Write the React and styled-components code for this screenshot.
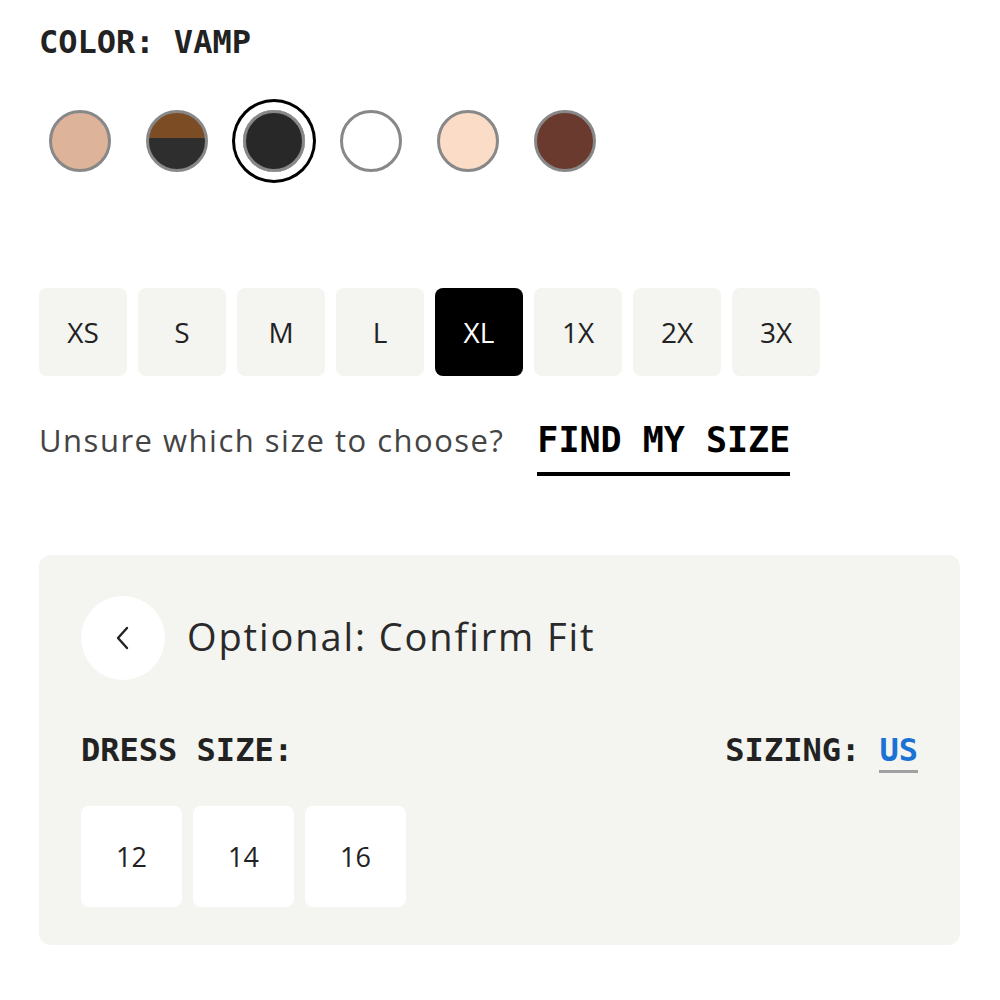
import React, { useState } from "react";
import styled, { createGlobalStyle } from "styled-components";

const GlobalStyle = createGlobalStyle`
  body {
    margin: 0;
    background: #ffffff;
    font-family: "Open Sans", "Liberation Sans", Arial, sans-serif;
  }
`;

const mono = `"DejaVu Sans Mono", "Liberation Mono", monospace`;
const sans = `"Open Sans", "Liberation Sans", Arial, sans-serif`;

const Page = styled.div`
  width: 1000px;
  padding: 24px 40px 0 39px;
  box-sizing: border-box;
`;

const Label = styled.div`
  font-family: ${mono};
  font-weight: 700;
  font-size: 32px;
  line-height: 36px;
  color: #222;
`;

const SwatchRow = styled.div`
  display: flex;
  align-items: center;
  gap: 35px;
  margin-top: 50px;
  padding-left: 10px;
`;

const SwatchRing = styled.div`
  width: 62px;
  height: 62px;
  border-radius: 50%;
  display: flex;
  align-items: center;
  justify-content: center;
  box-shadow: ${(p) => (p.$active ? "0 0 0 8px #fff, 0 0 0 11px #000" : "none")};
`;

const Swatch = styled.div`
  width: 62px;
  height: 62px;
  border-radius: 50%;
  box-sizing: border-box;
  border: 3px solid #888;
  background: ${(p) => p.$fill};
`;

const SizeRow = styled.div`
  display: flex;
  gap: 11px;
  margin-top: 116px;
`;

const SizeButton = styled.button`
  width: 88px;
  height: 88px;
  border: none;
  border-radius: 8px;
  background: ${(p) => (p.$active ? "#000" : "#f4f4f1")};
  color: ${(p) => (p.$active ? "#fff" : "#222")};
  font-family: ${sans};
  font-size: 28px;
  cursor: pointer;
  padding: 0;
`;

const HelpRow = styled.div`
  display: flex;
  align-items: baseline;
  gap: 33px;
  margin-top: 43px;
`;

const HelpText = styled.span`
  font-family: ${sans};
  font-size: 31px;
  color: #444;
  letter-spacing: 1.5px;
`;

const FindLink = styled.a`
  font-family: ${mono};
  font-weight: 700;
  font-size: 35px;
  color: #000;
  text-decoration: none;
  padding-bottom: 12px;
  border-bottom: 4px solid #000;
`;

const Panel = styled.div`
  margin-top: 79px;
  width: 921px;
  background: #f4f4f0;
  border-radius: 12px;
  padding: 41px 42px 38px 42px;
  box-sizing: border-box;
`;

const PanelHead = styled.div`
  display: flex;
  align-items: center;
  gap: 22px;
`;

const BackButton = styled.button`
  width: 84px;
  height: 84px;
  border-radius: 50%;
  border: none;
  background: #fff;
  display: flex;
  align-items: center;
  justify-content: center;
  padding: 0;
  cursor: pointer;
`;

const PanelTitle = styled.h2`
  margin: 0 0 4px;
  font-family: ${sans};
  font-weight: 400;
  font-size: 38px;
  color: #2a2a2a;
  letter-spacing: 1.9px;
`;

const FitRow = styled.div`
  display: flex;
  justify-content: space-between;
  align-items: flex-start;
  margin-top: 52px;
`;

const SmallLabel = styled.div`
  font-family: ${mono};
  font-weight: 700;
  font-size: 32px;
  line-height: 36px;
  color: #222;
`;

const UnitLink = styled.span`
  color: #1a73d4;
  display: inline-block;
  padding-bottom: 2px;
  border-bottom: 3px solid #a0a0a0;
`;

const DressRow = styled.div`
  display: flex;
  gap: 11px;
  margin-top: 33px;
`;

const DressButton = styled.button`
  width: 101px;
  height: 101px;
  border: none;
  border-radius: 8px;
  background: #fff;
  color: #222;
  font-family: ${sans};
  font-size: 27px;
  padding: 0;
  cursor: pointer;
`;

const swatches = [
  { name: "Sand", fill: "#ddb39a" },
  { name: "Cocoa/Black", fill: "linear-gradient(#7c4c25 0 44%, #2e2e2e 44% 100%)" },
  { name: "Vamp", fill: "#282828" },
  { name: "White", fill: "#ffffff" },
  { name: "Nude", fill: "#fbdcc6" },
  { name: "Espresso", fill: "#6b3a2e" },
];

const sizes = ["XS", "S", "M", "L", "XL", "1X", "2X", "3X"];
const dressSizes = ["12", "14", "16"];

export default function App() {
  const [color, setColor] = useState(2);
  const [size, setSize] = useState("XL");

  return (
    <Page>
      <GlobalStyle />
      <Label>COLOR: VAMP</Label>
      <SwatchRow>
        {swatches.map((s, i) => (
          <SwatchRing key={s.name} $active={i === color} onClick={() => setColor(i)}>
            <Swatch $fill={s.fill} />
          </SwatchRing>
        ))}
      </SwatchRow>
      <SizeRow>
        {sizes.map((s) => (
          <SizeButton key={s} $active={s === size} onClick={() => setSize(s)}>
            {s}
          </SizeButton>
        ))}
      </SizeRow>
      <HelpRow>
        <HelpText>Unsure which size to choose?</HelpText>
        <FindLink href="#">FIND MY SIZE</FindLink>
      </HelpRow>
      <Panel>
        <PanelHead>
          <BackButton aria-label="Back">
            <svg width="20" height="28" viewBox="0 0 20 28" fill="none">
              <path d="M14 4 L5 14 L14 24" stroke="#222" strokeWidth="2.4" strokeLinecap="round" strokeLinejoin="round" />
            </svg>
          </BackButton>
          <PanelTitle>Optional: Confirm Fit</PanelTitle>
        </PanelHead>
        <FitRow>
          <SmallLabel>DRESS SIZE:</SmallLabel>
          <SmallLabel>
            SIZING: <UnitLink>US</UnitLink>
          </SmallLabel>
        </FitRow>
        <DressRow>
          {dressSizes.map((d) => (
            <DressButton key={d}>{d}</DressButton>
          ))}
        </DressRow>
      </Panel>
    </Page>
  );
}
